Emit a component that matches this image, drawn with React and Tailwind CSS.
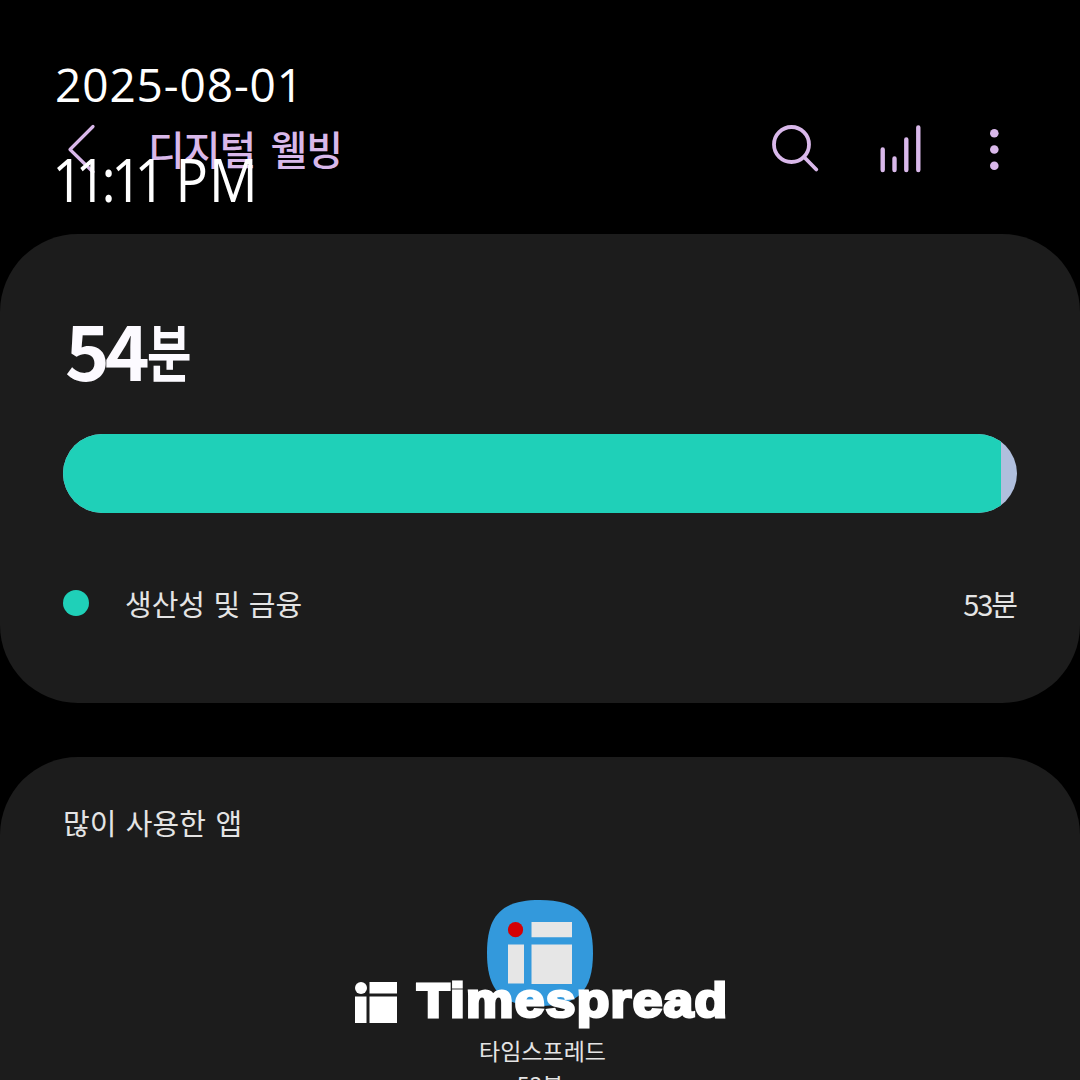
import React from 'react';

const usage = [{ name: '생산성 및 금융', time: '53분', color: 'bg-[#1fd0b8]' }];

function BackIcon() {
  return (
    <svg className="w-8 h-14" viewBox="0 0 32 56" fill="none" stroke="#d9b8ea" strokeWidth="3.2" strokeLinecap="round" strokeLinejoin="round">
      <path d="M27 5.5L4 28.5L27 51" />
    </svg>
  );
}

function SearchIcon() {
  return (
    <svg className="w-12 h-12" viewBox="0 0 48 48" fill="none" stroke="#d9b8ea" strokeWidth="3.8" strokeLinecap="round">
      <circle cx="20.5" cy="19.5" r="17.5" />
      <path d="M33 32L45.3 44.5" />
    </svg>
  );
}

function ChartIcon() {
  return (
    <svg className="w-12 h-12" viewBox="0 0 48 48" fill="none" stroke="#d9b8ea" strokeWidth="4.4" strokeLinecap="round">
      <path d="M6.7 24.5V45M18.5 33.5V45M30.3 14.5V45M42.3 2.5V45" />
    </svg>
  );
}

function MoreIcon() {
  return (
    <svg className="w-3 h-12" viewBox="0 0 12 48" fill="#d9b8ea">
      <circle cx="6.3" cy="8.2" r="4.3" />
      <circle cx="6.3" cy="24.5" r="4.3" />
      <circle cx="6.3" cy="40.8" r="4.3" />
    </svg>
  );
}

function AppIcon() {
  return (
    <svg className="w-[106px] h-[106px]" viewBox="0 0 106 106">
      <path d="M53 0C91 0 106 15 106 53C106 91 91 106 53 106C15 106 0 91 0 53C0 15 15 0 53 0Z" fill="#3399dc" />
      <circle cx="28.5" cy="29.7" r="7.6" fill="#d50004" />
      <path d="M44.5 22H85V37.3H44.5ZM21 44.5H37V83.5H21ZM44.5 44.5H85V84H44.5Z" fill="#e6e6e6" />
    </svg>
  );
}

function Watermark() {
  return (
    <div className="absolute left-[355px] top-[976px] flex items-start text-white">
      <svg className="w-[42px] h-[42px] mt-[6px]" viewBox="0 0 42 42" fill="currentColor">
        <circle cx="6" cy="6" r="6" />
        <path d="M14.5 0H42V11.5H14.5ZM0 14.5H11.5V41H0ZM14.5 14.5H42V41H14.5Z" />
      </svg>
      <span className="ml-[20px] font-['Liberation_Sans',sans-serif] font-bold text-[48px] leading-[49px] tracking-[1.2px] whitespace-nowrap origin-left scale-x-[1.11] [-webkit-text-stroke:3px_white]">
        Timespread
      </span>
    </div>
  );
}

export default function App() {
  return (
    <div className="relative w-[1080px] h-[1080px] overflow-hidden bg-black flex flex-col font-['Noto_Sans_CJK_KR',sans-serif] text-[#e4e4e4]">
      <header className="h-[234px] shrink-0 pt-[121px] pl-[66px] pr-[80px] flex items-start">
        <BackIcon />
        <h1 className="ml-[50px] text-[40px] leading-[54px] font-medium text-[#d9b8ea] whitespace-nowrap tracking-[-1px] [word-spacing:7px]">디지털 웰빙</h1>
        <div className="ml-auto flex items-center mt-1">
          <SearchIcon />
          <span className="ml-[57px] flex"><ChartIcon /></span>
          <span className="ml-[64px] flex"><MoreIcon /></span>
        </div>
      </header>

      <section className="h-[469px] shrink-0 rounded-[78px] bg-[#1c1c1c] px-[63px] pt-[80px]">
        <div className="h-[120px] flex items-start font-bold text-[#fcfaff] whitespace-nowrap">
          <span className="text-[76px] leading-[68px] tracking-[-5px] ml-[2px]">54</span>
          <span className="text-[62px] leading-[72px] origin-left scale-x-[.78] ml-[2px]">분</span>
        </div>
        <div className="h-[79px] rounded-full overflow-hidden flex bg-[#b0bfdd]">
          <div className="w-[938px] bg-[#1fd0b8]" />
        </div>
        {usage.map((item) => (
          <div key={item.name} className="mt-[70px] h-10 flex items-center">
            <span className={`w-[26px] h-[26px] rounded-full ${item.color}`} />
            <span className="ml-9 text-[29px] leading-10 whitespace-nowrap [word-spacing:2px]">{item.name}</span>
            <span className="ml-auto mr-[1px] text-[29px] leading-10 whitespace-nowrap tracking-[-2px]">{item.time}</span>
          </div>
        ))}
      </section>

      <section className="mt-[54px] h-[469px] shrink-0 rounded-[78px] bg-[#1c1c1c] px-[63px] pt-[45px]">
        <h2 className="text-[29px] leading-10 font-normal whitespace-nowrap [word-spacing:3px]">많이 사용한 앱</h2>
        <div className="mt-[58px] flex flex-col items-center">
          <AppIcon />
          <span className="mt-[31px] ml-[5px] text-[23px] leading-[26px] whitespace-nowrap">타임스프레드</span>
          <span className="mt-[8px] text-[23px] leading-[26px] whitespace-nowrap">53분</span>
        </div>
      </section>

      {/* Timestamp */}
      <div className="absolute left-[55px] top-[52px] text-white whitespace-nowrap font-['Open_Sans',sans-serif] font-normal">
        <div className="text-[46px] leading-[64px] tracking-[0.9px]">2025-08-01</div>
        <div className="mt-[23px] text-[60px] leading-[80px] origin-left scale-x-[.9]">
          <span className="tracking-[-8.5px] ml-[-3px]">11</span>
          <span className="tracking-[-5px] ml-[3px]">:</span>
          <span className="tracking-[-8.5px]">11</span>
          <span className="ml-[20px] tracking-[1px]">PM</span>
        </div>
      </div>

      <Watermark />
    </div>
  );
}
